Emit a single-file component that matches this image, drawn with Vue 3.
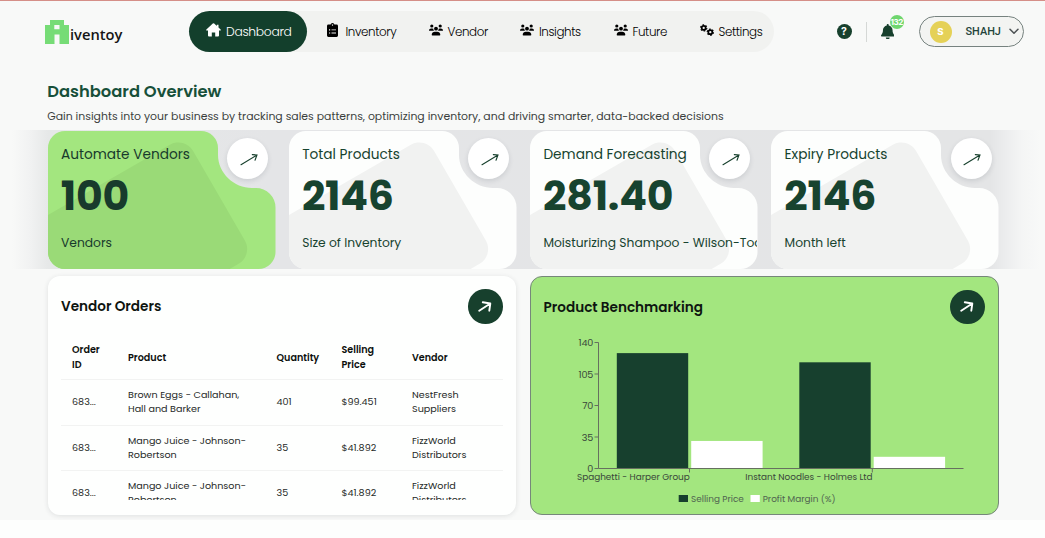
<script setup>
const nav = [
  { label: 'Dashboard', icon: 'home', active: true },
  { label: 'Inventory', icon: 'clipboard' },
  { label: 'Vendor', icon: 'users' },
  { label: 'Insights', icon: 'users' },
  { label: 'Future', icon: 'users' },
  { label: 'Settings', icon: 'cogs' },
]
const stats = [
  { title: 'Automate Vendors', value: '100', sub: 'Vendors', green: true },
  { title: 'Total Products', value: '2146', sub: 'Size of Inventory' },
  { title: 'Demand Forecasting', value: '281.40', sub: 'Moisturizing Shampoo - Wilson-Todd' },
  { title: 'Expiry Products', value: '2146', sub: 'Month left' },
]
const orders = [
  { id: '683...', product: 'Brown Eggs - Callahan, Hall and Barker', qty: '401', price: '$99.451', vendor: 'NestFresh Suppliers' },
  { id: '683...', product: 'Mango Juice - Johnson-Robertson', qty: '35', price: '$41.892', vendor: 'FizzWorld Distributors' },
  { id: '683...', product: 'Mango Juice - Johnson-Robertson', qty: '35', price: '$41.892', vendor: 'FizzWorld Distributors' },
]
const ticks = [140, 105, 70, 35, 0]
const base = 136.5
const scale = 0.9
const bars = [
  { x: 85.8, v: 128.2, dark: true },
  { x: 160.2, v: 30.6 },
  { x: 268.3, v: 118, dark: true },
  { x: 342.7, v: 13 },
]
const groups = [
  { x: 158.5, label: 'Spaghetti - Harper Group' },
  { x: 341.3, label: 'Instant Noodles - Holmes Ltd' },
]
</script>

<template>
  <div class="page">
    <header class="top">
      <div class="logo">
        <svg width="24" height="24" viewBox="0 0 24 24">
          <path fill="#76dc76" fill-rule="evenodd" d="M5 0H19V5H24V24H14.5V14.5H9.5V24H0V5H5ZM9.3 5V9.3H14.5V5Z" />
        </svg>
        <span>iventoy</span>
      </div>

      <nav class="nav">
        <a v-for="n in nav" :key="n.label" class="item" :class="{ active: n.active }">
          <svg v-if="n.icon === 'home'" class="ico" width="15" height="14" viewBox="0 0 15 14">
            <path fill="currentColor" d="M7.5.3a1 1 0 0 1 .7.3l2.6 2.3V1.7h1.7v2.8L14.600 6.400c.5.5.2 1.200-.5 1.200H13V12.500a1 1 0 0 1-1 1H9.200V9.500H5.800v4H3a1 1 0 0 1-1-1V7.600H.9C.200 7.600-.1 6.900.4 6.400L6.800.6A1 1 0 0 1 7.500.3Z" />
          </svg>
          <svg v-else-if="n.icon === 'clipboard'" class="ico clip" width="11" height="14" viewBox="0 0 11 14">
            <path fill="currentColor" fill-rule="evenodd" d="M5.500 0A1.900 1.900 0 0 1 7.400 1.600H9.600A1.400 1.400 0 0 1 11 3V12.500A1.400 1.400 0 0 1 9.600 13.900H1.400A1.400 1.400 0 0 1 0 12.500V3A1.400 1.400 0 0 1 1.400 1.600H3.600A1.900 1.900 0 0 1 5.500 0ZM5.500 1.200a.7.7 0 1 0 .01 0ZM2 6.200H3.200V7.400H2ZM4.500 6.400H9V7.200H4.500ZM2 9.400H3.200V10.600H2ZM4.500 9.600H9V10.400H4.500Z" />
          </svg>
          <svg v-else-if="n.icon === 'users'" class="ico" width="14" height="12" viewBox="0 0 14 12">
            <g fill="currentColor">
              <circle cx="2.800" cy="2" r="1.600" />
              <circle cx="11.200" cy="2" r="1.600" />
              <circle cx="7" cy="4.700" r="1.900" />
              <path d="M0 6.500C0 5.200 1 4.400 2.200 4.400H3.200q.7 0 1.100.3a3 3 0 0 0 .7 2H.4Q0 6.700 0 6.500ZM14 6.500C14 5.200 13 4.400 11.800 4.400H10.800q-.7 0-1.100.3a3 3 0 0 1-.7 2H13.600Q14 6.700 14 6.500Z" />
              <path d="M2.700 10.800C2.700 8.900 4.200 7.700 5.800 7.700H8.200C9.800 7.700 11.300 8.900 11.300 10.800Q11.300 11.400 10.700 11.400H3.300Q2.700 11.400 2.700 10.800Z" />
            </g>
          </svg>
          <svg v-else class="ico" width="14" height="12" viewBox="0 0 14 12">
            <g fill="none" stroke="currentColor">
              <circle cx="3.700" cy="3.900" r="2" stroke-width="1.700" />
              <circle cx="3.700" cy="3.900" r="3.100" stroke-width="1.200" stroke-dasharray="1.623 1.623" />
              <circle cx="10.300" cy="8.200" r="2" stroke-width="1.700" />
              <circle cx="10.300" cy="8.200" r="3.100" stroke-width="1.200" stroke-dasharray="1.623 1.623" />
            </g>
          </svg>
          <span>{{ n.label }}</span>
        </a>
      </nav>

      <div class="tools">
        <div class="help">?</div>
        <i class="divider"></i>
        <div class="bell">
          <svg width="13.500" height="15.500" viewBox="0 0 448 512" preserveAspectRatio="none">
            <path fill="#17402d" d="M224 0c-17.700 0-32 14.300-32 32V51.200C119 66 64 130.600 64 208v18.800c0 47-17.300 92.400-48.500 127.600l-7.400 8.300c-8.400 9.400-10.400 22.900-5.300 34.400S19.400 416 32 416H416c12.600 0 24-7.400 29.200-18.900s3.100-25-5.300-34.400l-7.400-8.300C401.300 319.200 384 273.900 384 226.800V208c0-77.400-55-142-128-156.800V32c0-17.700-14.300-32-32-32zm45.300 493.300c12-12 18.700-28.300 18.700-45.300H160c0 17 6.700 33.300 18.700 45.300s28.300 18.700 45.300 18.700s33.300-6.700 45.300-18.700z" />
          </svg>
          <b>132</b>
        </div>
        <div class="profile">
          <div class="avatar">S</div>
          <span>SHAHJ</span>
          <svg width="10" height="7" viewBox="0 0 10 7"><path d="M1 1.200 5 5.300 9 1.200" fill="none" stroke="#4d5254" stroke-width="1.500" stroke-linecap="round" stroke-linejoin="round" /></svg>
        </div>
      </div>
    </header>

    <section class="intro">
      <h1>Dashboard Overview</h1>
      <p>Gain insights into your business by tracking sales patterns, optimizing inventory, and driving smarter, data-backed decisions</p>
    </section>

    <section class="stats">
      <article v-for="s in stats" :key="s.title" class="stat" :class="{ green: s.green }">
        <svg class="shape" width="228" height="138" viewBox="0 0 228 138">
          <defs>
            <clipPath id="card-outline">
              <path d="M0 17A17 17 0 0 1 17 0H153A17 17 0 0 1 170 17V24C170 42 186 57 204 57H208A19.500 19.500 0 0 1 227.500 76.500V121A17 17 0 0 1 210.500 138H17A17 17 0 0 1 0 121Z" />
            </clipPath>
          </defs>
          <path class="base" d="M0 17A17 17 0 0 1 17 0H153A17 17 0 0 1 170 17V24C170 42 186 57 204 57H208A19.500 19.500 0 0 1 227.500 76.500V121A17 17 0 0 1 210.500 138H17A17 17 0 0 1 0 121Z" />
          <g clip-path="url(#card-outline)">
            <rect class="tile" x="-200" y="0" width="200" height="137.500" rx="17" transform="translate(136.600 5.200) rotate(-30)" />
          </g>
        </svg>
        <div class="body">
          <h3>{{ s.title }}</h3>
          <strong>{{ s.value }}</strong>
          <p>{{ s.sub }}</p>
        </div>
        <div class="go">
          <svg width="20" height="20" viewBox="-10 -10 20 20"><path d="M-7 6.700 9 -3M4.300 -3.400 9 -3 7 2.200" fill="none" stroke="#17402d" stroke-width="1.100" stroke-linecap="round" /></svg>
        </div>
      </article>
    </section>

    <section class="panels">
      <article class="panel">
        <div class="head">
          <h2>Vendor Orders</h2>
          <div class="open">
            <svg width="20" height="20" viewBox="-10 -10 20 20"><path d="M-5.800 3.700 5.300 -3.500M-2.200 -4.700 5.300 -3.500 4.300 3.700" fill="none" stroke="#fff" stroke-width="1.900" stroke-linecap="round" stroke-linejoin="round" /></svg>
          </div>
        </div>
        <div class="scroll">
          <table>
            <colgroup><col class="c1" /><col class="c2" /><col class="c3" /><col class="c4" /><col class="c5" /></colgroup>
            <thead>
              <tr><th>Order ID</th><th>Product</th><th>Quantity</th><th>Selling Price</th><th>Vendor</th></tr>
            </thead>
            <tbody>
              <tr v-for="(o, i) in orders" :key="i">
                <td>{{ o.id }}</td><td>{{ o.product }}</td><td>{{ o.qty }}</td><td>{{ o.price }}</td><td>{{ o.vendor }}</td>
              </tr>
            </tbody>
          </table>
        </div>
      </article>

      <article class="panel chart">
        <div class="head">
          <h2>Product Benchmarking</h2>
          <div class="open">
            <svg width="20" height="20" viewBox="-10 -10 20 20"><path d="M-5.800 3.700 5.300 -3.500M-2.200 -4.700 5.300 -3.500 4.300 3.700" fill="none" stroke="#fff" stroke-width="1.900" stroke-linecap="round" stroke-linejoin="round" /></svg>
          </div>
        </div>
        <svg class="plot" width="466" height="178" viewBox="0 0 466 178">
          <rect v-for="b in bars" :key="b.x" :x="b.x" :y="base - b.v * scale" width="71.400" :height="b.v * scale" :fill="b.dark ? '#17402e' : '#fff'" />
          <path d="M67.500 10.500V136.500H432.500" class="axis" />
          <g v-for="t in ticks" :key="t">
            <path class="axis" :d="`M63.500 ${base - t * scale}h4`" />
            <text class="tick" x="62.300" :y="base - t * scale + 3.900">{{ t }}</text>
          </g>
          <g v-for="g in groups" :key="g.x">
            <path class="axis" :d="`M${g.x} 136.500v4`" />
            <text class="tick name" :x="g.x + .3" y="148.300">{{ g.label }}</text>
          </g>
          <rect x="147.700" y="163" width="9.300" height="7" fill="#17402e" />
          <text class="legend" x="160" y="169.800">Selling Price</text>
          <rect x="219.500" y="163" width="9.300" height="7" fill="#fff" />
          <text class="legend" x="231.700" y="169.800">Profit Margin (%)</text>
        </svg>
      </article>
    </section>
  </div>
</template>

<style>
body { background: #fdfefd; }
</style>

<style scoped>
* { box-sizing: border-box; }
h1, h2, h3, p { margin: 0; }
.page {
  width: 1045px;
  height: 519.500px;
  background: #f8f9f8;
  border-top: 1px solid #d58f88;
  overflow: hidden;
  font-family: Poppins, Inter, "Open Sans", sans-serif;
  color: #111;
}
.top { display: flex; height: 61px; padding: 10px 21px 0 45px; align-items: flex-start; }
.logo { display: flex; width: 144px; padding-top: 9px; align-items: flex-start; }
.logo span { margin: 3.500px 0 0 1px; font: 600 14.700px/20px "Open Sans", sans-serif; color: #151515; }
.nav {
  display: grid;
  grid-template-columns: 118px 101.500px 91.500px 93.500px 86px 94.500px;
  height: 41px;
  border-radius: 20.500px;
  background: #f1f2f0;
}
.item { display: flex; align-items: center; padding-left: 20px; gap: 5px; font-size: 11.900px; font-weight: 300; letter-spacing: -.4px; color: #000; white-space: nowrap; }
.item span { padding-top: 1px; }
.item .ico { flex: none; margin-top: -3px; }
.item .clip { margin-right: 2.500px; }
.item.active { padding-left: 17px; border-radius: 20.500px; background: #133f2c; color: #fff; letter-spacing: -.35px; font-size: 12.100px; }
.item.active { letter-spacing: -.3px; font-size: 12.300px; }
.tools { display: flex; align-items: center; margin-left: auto; height: 41px; }
.help { width: 15px; height: 15px; border-radius: 50%; background: #17402d; color: #fff; font: 700 10.500px/15px Inter, sans-serif; text-align: center; }
.divider { width: 1px; height: 20px; margin-left: 14px; background: #d5d8d6; }
.bell { position: relative; width: 14px; height: 16px; margin-left: 14px; }
.bell svg { display: block; }
.bell b { position: absolute; left: 9.500px; top: -9px; width: 14px; height: 14px; border-radius: 50%; background: #6fd66f; color: #fff; font: 700 8px/14px Inter, sans-serif; text-align: center; text-indent: -.5px; letter-spacing: -.4px; }
.profile { display: flex; align-items: center; width: 105.500px; height: 30.500px; margin-left: 24px; padding-left: 10px; border: 1px solid #76827f; border-radius: 16px; background: #f3f4f2; }
.avatar { width: 22px; height: 22px; border-radius: 50%; background: #e5d157; color: #fff; font: 800 9.500px/22px Inter, sans-serif; text-align: center; }
.profile span { width: 44px; margin-left: 14px; font: 500 10.900px/16px Roboto, sans-serif; letter-spacing: 0; color: #23433a; }
.profile svg { margin-left: -1px; }
.intro { padding: 17.500px 0 0 47.200px; height: 68px; }
.intro h1 { font-size: 16.350px; line-height: 24px; font-weight: 600; color: #17503a; }
.intro p { margin-top: 4px; font-size: 10.900px; line-height: 17px; color: #3b3f3d; }
.stats {
  display: grid;
  grid-template-columns: repeat(4, 227.500px);
  column-gap: 13.700px;
  height: 139px;
  padding: .5px 0 0 47.500px;
  overflow: hidden;
  background: linear-gradient(90deg, #f8f9f8 12px, #f1f2f2 30px, #e6e8e8 48px, #e4e5e7 270px, #e4e5e6 990px, #ecedee 1006px, #f4f5f5 1022px, #f8f9f8 1040px);
}
.stat { position: relative; height: 138px; color: #17432f; }
.shape { display: block; }
.base { fill: #fdfefd; }
.tile { fill: #f1f2f1; }
.green .base { fill: #a3e67f; }
.green .tile { fill: #9ada77; }
.green { color: #183a2c; }
.body { position: absolute; inset: 0; padding: 14.500px 0 0 13.500px; overflow: hidden; white-space: nowrap; }
.body h3 { font-size: 13.700px; line-height: 20px; font-weight: 400; }
.body strong { display: block; margin: 9.500px 0 0 -.3px; font-size: 41px; line-height: 42px; font-weight: 700; letter-spacing: -.2px; }
.body p { margin-top: 17.500px; font-size: 12.300px; line-height: 18px; }
.go { position: absolute; left: 179.500px; top: 7px; width: 41px; height: 41px; border-radius: 50%; background: #fff; display: grid; place-items: center; box-shadow: 0 2px 5px rgba(40, 50, 60, .13); }
.panels { display: grid; grid-template-columns: 468.500px 469px; column-gap: 13.500px; padding: 7px 0 0 47.500px; }
.panel { height: 238.500px; border-radius: 12px; background: #fefffe; box-shadow: 0 1px 5px rgba(40, 50, 60, .12); padding: 0 13.500px 0 13.500px; }
.chart { padding: 0; border: 1px solid #76877a; background: #a3e67f; box-shadow: none; }
.head { display: flex; justify-content: space-between; align-items: center; height: 61px; }
.head h2 { padding-top: 1px; font-size: 13.600px; font-weight: 600; color: #0e1510; }
.open { width: 34.500px; height: 34.500px; border-radius: 50%; background: #17402d; display: grid; place-items: center; }
.chart .head { height: 55px; padding: 5px 13px 0 13px; }
.plot { display: block; }
.scroll { height: 165px; overflow: hidden; margin-top: -2.500px; }
table { width: 441.500px; table-layout: fixed; border-collapse: collapse; font-size: 9.600px; line-height: 14.200px; text-align: left; }
.c1 { width: 56px; } .c2 { width: 148.500px; } .c3 { width: 65px; } .c4 { width: 70.500px; } .c5 { width: 101.500px; }
th, td { height: 45.300px; padding: 0 0 0 11px; vertical-align: middle; border-bottom: 1px solid #f2f3f2; }
th { font-weight: 600; color: #0c0f0d; padding-right: 20px; padding-top: 1.500px; }
th:nth-child(3) { padding-right: 0; }
td { color: #262a28; padding-right: 18px; }
td:nth-child(1), td:nth-child(3), td:nth-child(4) { padding-right: 0; }
.axis { fill: none; stroke: #66705f; stroke-width: 1; }
.tick { font-size: 9.600px; text-anchor: end; fill: #39463a; letter-spacing: -.1px; }
.name { font-size: 8.900px; letter-spacing: 0; }
.legend { font-size: 8.900px; fill: #4f6350; }
</style>
